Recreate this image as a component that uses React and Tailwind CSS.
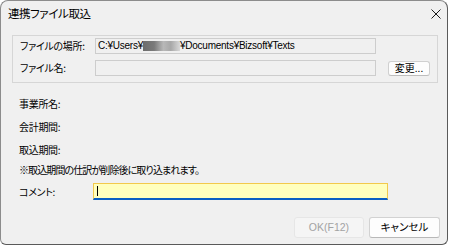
import React from "react";

const jp = { fontFamily: '"Noto Sans CJK JP", "Noto Sans", sans-serif', fontFeatureSettings: '"palt"' };
const lat = { fontFamily: '"Liberation Sans", "Noto Sans CJK JP", sans-serif' };

function Label({ children, className = "" }) {
  return (
    <div className={"text-[10px] tracking-[-0.3px] text-black leading-none " + className} style={jp}>
      {children}
    </div>
  );
}

export default function App() {
  return (
    <div className="w-[450px] h-[246px] bg-white">
      <div className="w-[448px] h-[245px] rounded-t-[8px] rounded-b-[6px] border border-[#8c8c8c] border-r-[#5a5a5a] border-b-[#5a5a5a] bg-[#f0f0f0] flex flex-col overflow-hidden">
        {/* title bar */}
        <div className="h-[25px] flex items-center justify-between pl-[7px] pr-[5px]">
          <div className="text-[11.5px] tracking-[-0.4px] text-black leading-none" style={jp}>連携ファイル取込</div>
          <svg width="10" height="10" viewBox="0 0 10 10" className="mr-[1px]">
            <path d="M0.5 0.5 L9.5 9.5 M9.5 0.5 L0.5 9.5" stroke="#1a1a1a" strokeWidth="1" fill="none" />
          </svg>
        </div>
        {/* body */}
        <div className="flex flex-col pl-[11px] pt-[9px]">
          {/* group */}
          <div className="w-[426px] h-[48px] border border-[#d6d6d6] flex flex-col pl-[7px] pt-[2px] gap-[6px]">
            <div className="flex items-center h-[16px]">
              <Label className="w-[75px]">ファイルの場所:</Label>
              <div className="w-[281px] h-[16px] border border-[#cdcdcd] flex items-center pl-[2px]">
                <span className="text-[10px] tracking-[-0.25px] text-black leading-none" style={lat}>C:¥Users¥</span>
                <span className="w-[37px] h-[10px] bg-[linear-gradient(90deg,#6c6c6c_0%,#7a7a7a_30%,#b8b8b8_55%,#a8a8a8_75%,#d8d8d8_100%)]" />
                <span className="text-[10px] tracking-[-0.25px] text-black leading-none" style={lat}>¥Documents¥Bizsoft¥Texts</span>
              </div>
            </div>
            <div className="flex items-center h-[16px]">
              <Label className="w-[75px]">ファイル名:</Label>
              <div className="w-[281px] h-[16px] border border-[#cdcdcd]" />
              <div className="ml-[12px] w-[42px] h-[15px] rounded-[3px] border border-[#d0d0d0] border-b-[#bdbdbd] bg-[#fdfdfd] flex items-center justify-center">
                <span className="text-[10px] text-black leading-none" style={jp}>変更...</span>
              </div>
            </div>
          </div>
          {/* labels */}
          <div className="flex flex-col pl-[7px] mt-[10px]">
            <div className="h-[22px] flex items-center"><Label>事業所名:</Label></div>
            <div className="h-[23px] flex items-center"><Label>会計期間:</Label></div>
            <div className="h-[23px] flex items-center"><Label>取込期間:</Label></div>
            <div className="h-[18px] flex items-center"><Label className="tracking-[-0.9px]">※取込期間の仕訳が削除後に取り込まれます。</Label></div>
            <div className="mt-[4px] h-[17px] flex items-center">
              <Label className="w-[74px]">コメント:</Label>
              <div className="w-[295px] h-[17px] bg-[#ffffbe] border border-[#f2c94c] border-b-[2px] border-b-[#0a5fc4] flex items-center pl-[3px]">
                <div className="w-[1px] h-[10px] bg-black" />
              </div>
            </div>
          </div>
          {/* buttons */}
          <div className="mt-[17px] flex justify-end gap-[5px] w-[428px]">
            <div className="w-[70px] h-[21px] rounded-[3px] border border-[#e6e6e6] bg-[#f5f5f5] flex items-center justify-center">
              <span className="text-[10.5px] text-[#a3a3a3] leading-none" style={lat}>OK(F12)</span>
            </div>
            <div className="w-[71px] h-[21px] rounded-[3px] border border-[#d2d2d2] border-b-[#b8b8b8] bg-[#fdfdfd] flex items-center justify-center">
              <span className="text-[10.5px] text-black leading-none" style={jp}>キャンセル</span>
            </div>
          </div>
        </div>
      </div>
    </div>
  );
}
